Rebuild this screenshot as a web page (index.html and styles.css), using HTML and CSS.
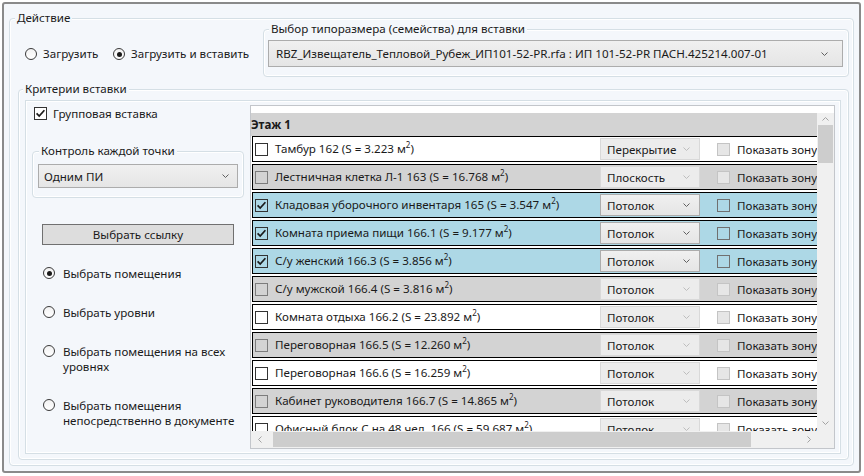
FILE: index.html
```html
<!DOCTYPE html>
<html lang="ru">
<head>
<meta charset="utf-8">
<title>Вставка извещателей</title>
<link rel="stylesheet" href="styles.css">
</head>
<body>
<div class="window">
  <section class="gb gb-action">
    <div class="gb-title">Действие</div>
    <div class="action-row">
      <div class="mode">
        <div class="radio radio-first"><span class="rb"></span><span>Загрузить</span></div>
        <div class="radio"><span class="rb on"></span><span>Загрузить и вставить</span></div>
      </div>
      <section class="gb gb-family">
        <div class="gb-title">Выбор типоразмера (семейства) для вставки</div>
        <div class="combo combo-family">
          <span class="combo-text">RBZ_Извещатель_Тепловой_Рубеж_ИП101-52-PR.rfa : ИП 101-52-PR ПАСН.425214.007-01</span>
          <svg class="chev" width="7" height="4" viewBox="0 0 7 4"><polyline points="0.5,0.5 3.5,3.5 6.5,0.5"/></svg>
        </div>
      </section>
    </div>

    <section class="gb gb-criteria">
      <div class="gb-title gb-title-crit">Критерии вставки</div>
      <div class="crit-panel">
        <div class="left-col">
          <div class="check-line">
            <span class="cb"><svg width="11" height="11" viewBox="0 0 11 11"><path d="M1.6 5.4 L4.2 8.1 L9.4 2.2"/></svg></span>
            <span class="check-label">Групповая вставка</span>
          </div>

          <section class="gb gb-control">
            <div class="gb-title gb-title-control">Контроль каждой точки</div>
            <div class="combo combo-control">
              <span class="combo-text">Одним ПИ</span>
              <svg class="chev" width="7" height="4" viewBox="0 0 7 4"><polyline points="0.5,0.5 3.5,3.5 6.5,0.5"/></svg>
            </div>
          </section>

          <div class="btn">Выбрать ссылку</div>

          <div class="radio-list">
            <div class="radio r-item"><span class="rb on"></span><span class="r-text">Выбрать помещения</span></div>
            <div class="radio r-item"><span class="rb"></span><span class="r-text">Выбрать уровни</span></div>
            <div class="radio r-item"><span class="rb"></span><span class="r-text">Выбрать помещения на всех уровнях</span></div>
            <div class="radio r-item"><span class="rb"></span><span class="r-text">Выбрать помещения непосредственно в документе</span></div>
          </div>
        </div>

        <div class="grid">
          <div class="grid-main">
            <div class="viewport">
              <div class="group-header">Этаж 1</div>

              <div class="row row-white">
                <span class="cb cb-row"></span>
                <span class="room">Тамбур 162 (S = 3.223 м<sup>2</sup>)</span>
                <span class="combo combo-row disabled"><span class="combo-text">Перекрытие</span><svg class="chev" width="7" height="4" viewBox="0 0 7 4"><polyline points="0.5,0.5 3.5,3.5 6.5,0.5"/></svg></span>
                <span class="cb cb-zone disabled"></span>
                <span class="zone-label">Показать зону</span>
              </div>

              <div class="row row-gray">
                <span class="cb cb-row"></span>
                <span class="room">Лестничная клетка Л-1 163 (S = 16.768 м<sup>2</sup>)</span>
                <span class="combo combo-row disabled"><span class="combo-text">Плоскость</span><svg class="chev" width="7" height="4" viewBox="0 0 7 4"><polyline points="0.5,0.5 3.5,3.5 6.5,0.5"/></svg></span>
                <span class="cb cb-zone disabled"></span>
                <span class="zone-label">Показать зону</span>
              </div>

              <div class="row row-blue">
                <span class="cb cb-row"><svg width="11" height="11" viewBox="0 0 11 11"><path d="M1.6 5.4 L4.2 8.1 L9.4 2.2"/></svg></span>
                <span class="room">Кладовая уборочного инвентаря 165 (S = 3.547 м<sup>2</sup>)</span>
                <span class="combo combo-row"><span class="combo-text">Потолок</span><svg class="chev" width="7" height="4" viewBox="0 0 7 4"><polyline points="0.5,0.5 3.5,3.5 6.5,0.5"/></svg></span>
                <span class="cb cb-zone"></span>
                <span class="zone-label">Показать зону</span>
              </div>

              <div class="row row-blue">
                <span class="cb cb-row"><svg width="11" height="11" viewBox="0 0 11 11"><path d="M1.6 5.4 L4.2 8.1 L9.4 2.2"/></svg></span>
                <span class="room">Комната приема пищи 166.1 (S = 9.177 м<sup>2</sup>)</span>
                <span class="combo combo-row"><span class="combo-text">Потолок</span><svg class="chev" width="7" height="4" viewBox="0 0 7 4"><polyline points="0.5,0.5 3.5,3.5 6.5,0.5"/></svg></span>
                <span class="cb cb-zone"></span>
                <span class="zone-label">Показать зону</span>
              </div>

              <div class="row row-blue">
                <span class="cb cb-row"><svg width="11" height="11" viewBox="0 0 11 11"><path d="M1.6 5.4 L4.2 8.1 L9.4 2.2"/></svg></span>
                <span class="room">С/у женский 166.3 (S = 3.856 м<sup>2</sup>)</span>
                <span class="combo combo-row"><span class="combo-text">Потолок</span><svg class="chev" width="7" height="4" viewBox="0 0 7 4"><polyline points="0.5,0.5 3.5,3.5 6.5,0.5"/></svg></span>
                <span class="cb cb-zone"></span>
                <span class="zone-label">Показать зону</span>
              </div>

              <div class="row row-gray">
                <span class="cb cb-row"></span>
                <span class="room">С/у мужской 166.4 (S = 3.816 м<sup>2</sup>)</span>
                <span class="combo combo-row disabled"><span class="combo-text">Потолок</span><svg class="chev" width="7" height="4" viewBox="0 0 7 4"><polyline points="0.5,0.5 3.5,3.5 6.5,0.5"/></svg></span>
                <span class="cb cb-zone disabled"></span>
                <span class="zone-label">Показать зону</span>
              </div>

              <div class="row row-white">
                <span class="cb cb-row"></span>
                <span class="room">Комната отдыха 166.2 (S = 23.892 м<sup>2</sup>)</span>
                <span class="combo combo-row disabled"><span class="combo-text">Потолок</span><svg class="chev" width="7" height="4" viewBox="0 0 7 4"><polyline points="0.5,0.5 3.5,3.5 6.5,0.5"/></svg></span>
                <span class="cb cb-zone disabled"></span>
                <span class="zone-label">Показать зону</span>
              </div>

              <div class="row row-gray">
                <span class="cb cb-row"></span>
                <span class="room">Переговорная 166.5 (S = 12.260 м<sup>2</sup>)</span>
                <span class="combo combo-row disabled"><span class="combo-text">Потолок</span><svg class="chev" width="7" height="4" viewBox="0 0 7 4"><polyline points="0.5,0.5 3.5,3.5 6.5,0.5"/></svg></span>
                <span class="cb cb-zone disabled"></span>
                <span class="zone-label">Показать зону</span>
              </div>

              <div class="row row-white">
                <span class="cb cb-row"></span>
                <span class="room">Переговорная 166.6 (S = 16.259 м<sup>2</sup>)</span>
                <span class="combo combo-row disabled"><span class="combo-text">Потолок</span><svg class="chev" width="7" height="4" viewBox="0 0 7 4"><polyline points="0.5,0.5 3.5,3.5 6.5,0.5"/></svg></span>
                <span class="cb cb-zone disabled"></span>
                <span class="zone-label">Показать зону</span>
              </div>

              <div class="row row-gray">
                <span class="cb cb-row"></span>
                <span class="room">Кабинет руководителя 166.7 (S = 14.865 м<sup>2</sup>)</span>
                <span class="combo combo-row disabled"><span class="combo-text">Потолок</span><svg class="chev" width="7" height="4" viewBox="0 0 7 4"><polyline points="0.5,0.5 3.5,3.5 6.5,0.5"/></svg></span>
                <span class="cb cb-zone disabled"></span>
                <span class="zone-label">Показать зону</span>
              </div>

              <div class="row row-white">
                <span class="cb cb-row"></span>
                <span class="room">Офисный блок С на 48 чел. 166 (S = 59.687 м<sup>2</sup>)</span>
                <span class="combo combo-row disabled"><span class="combo-text">Потолок</span><svg class="chev" width="7" height="4" viewBox="0 0 7 4"><polyline points="0.5,0.5 3.5,3.5 6.5,0.5"/></svg></span>
                <span class="cb cb-zone disabled"></span>
                <span class="zone-label">Показать зону</span>
              </div>
            </div>

            <div class="vscroll">
              <div class="sb-btn sb-up"><svg width="7" height="4" viewBox="0 0 7 4"><polyline points="0.5,3.5 3.5,0.5 6.5,3.5"/></svg></div>
              <div class="vthumb"></div>
              <div class="sb-fill"></div>
              <div class="sb-btn sb-down"><svg width="7" height="4" viewBox="0 0 7 4"><polyline points="0.5,0.5 3.5,3.5 6.5,0.5"/></svg></div>
            </div>
          </div>
          <div class="grid-foot">
            <div class="hscroll">
              <div class="sb-btn sb-left"><svg width="4" height="7" viewBox="0 0 4 7"><polyline points="3.5,0.5 0.5,3.5 3.5,6.5"/></svg></div>
              <div class="hthumb"></div>
              <div class="sb-fill"></div>
              <div class="sb-btn sb-right"><svg width="4" height="7" viewBox="0 0 4 7"><polyline points="0.5,0.5 3.5,3.5 0.5,6.5"/></svg></div>
            </div>
            <div class="corner"></div>
          </div>
        </div>
      </div>
    </section>
  </section>
</div>
</body>
</html>
```

FILE: styles.css
```css
* { box-sizing: border-box; }

html, body {
  margin: 0;
  padding: 0;
  background: #ffffff;
}

body {
  font-family: "Noto Sans", "Open Sans", sans-serif;
  font-size: 11.6px;
  color: #1a1a1a;
}

.window {
  width: 859px;
  height: 471px;
  margin: 2px 0 0 2px;
  border: 2px solid #8a8a8a;
  border-radius: 3px;
  background: #f4f7fb;
  padding: 14px 0 0 5px;
}

/* group boxes */
.gb {
  border: 1px solid #d5dfe5;
  border-radius: 4px;
  box-shadow: inset 0 0 0 1px #ffffff;
}

.gb-title {
  width: fit-content;
  height: 16px;
  line-height: 16px;
  padding: 0 2px;
  margin: -9px 0 0 5px;
  background: #f4f7fb;
  white-space: nowrap;
}

.gb-action {
  width: 845px;
  height: 448px;
}

.action-row {
  display: flex;
  margin-top: 3px;
}

.mode {
  width: 253px;
  display: flex;
  align-items: center;
  padding: 17px 0 0 15px;
  align-self: flex-start;
}

.radio {
  display: flex;
  align-items: center;
  height: 16px;
  line-height: 16px;
}

.radio-first { width: 88px; }

.rb {
  width: 12px;
  height: 12px;
  border-radius: 50%;
  border: 1px solid #3a3a3a;
  background: linear-gradient(#f2f2f2, #ffffff);
  display: inline-flex;
  align-items: center;
  justify-content: center;
  flex-shrink: 0;
  margin-right: 6px;
}

.rb.on::after {
  content: "";
  width: 5px;
  height: 5px;
  border-radius: 50%;
  background: #1a1a1a;
}

.gb-family {
  width: 586px;
  height: 48px;
}

/* combo boxes */
.combo {
  display: flex;
  align-items: center;
  justify-content: space-between;
  border: 1px solid #acacac;
  background: linear-gradient(#f0f0f0, #e5e5e5);
  color: #1a1a1a;
  white-space: nowrap;
  overflow: hidden;
}

.chev {
  flex-shrink: 0;
  fill: none;
  stroke: #606060;
  stroke-width: 1;
}

.combo-family {
  width: 575px;
  height: 27px;
  margin: 3px 0 0 4px;
  padding: 0 14px 0 7px;
}

.gb-criteria {
  width: 831px;
  height: 371px;
  margin: 12px 0 0 8px;
}

.gb-title-crit { margin-left: 4px; }

.crit-panel {
  width: 816px;
  height: 354px;
  margin: 3px 0 0 6px;
  border: 1px solid #d5dfe5;
  box-shadow: inset 0 0 0 1px #ffffff;
  display: flex;
  align-items: flex-start;
}

/* left column */
.left-col {
  width: 224px;
  flex-shrink: 0;
}

.check-line {
  display: flex;
  align-items: center;
  height: 16px;
  margin: 4px 0 0 8px;
}

.cb {
  width: 13px;
  height: 13px;
  border: 1px solid #333333;
  background: #ffffff;
  display: inline-flex;
  align-items: center;
  justify-content: center;
  flex-shrink: 0;
}

.cb svg {
  fill: none;
  stroke: #1a1a1a;
  stroke-width: 1.7;
}

.check-label { margin-left: 6px; }

.gb-control {
  width: 212px;
  height: 47px;
  margin: 30px 0 0 6px;
}

.gb-title-control { margin-left: 6px; }

.combo-control {
  width: 200px;
  height: 24px;
  margin: 5px 0 0 5px;
  padding: 0 8px 0 5px;
}

.btn {
  width: 192px;
  height: 21px;
  margin: 26px 0 0 16px;
  border: 1px solid #707070;
  background: #dddddd;
  display: flex;
  align-items: center;
  justify-content: center;
}

.radio-list {
  display: flex;
  flex-direction: column;
  gap: 24px;
  margin: 21px 0 0 17px;
}

.r-item {
  align-items: flex-start;
  height: auto;
  line-height: 15px;
}

.r-item .rb {
  margin: 1px 8px 0 0;
}

.r-text { width: 180px; }

/* data grid */
.grid {
  width: 585px;
  height: 344px;
  margin-top: 4px;
  border: 1px solid #c3c6cb;
  background: #ffffff;
  padding-top: 7px;
  display: flex;
  flex-direction: column;
}

.grid-main {
  display: flex;
  height: 318px;
}

.viewport {
  width: 566px;
  height: 318px;
  overflow: hidden;
}

.group-header {
  height: 23px;
  line-height: 23px;
  background: #d3d3d3;
  font-weight: bold;
  width: 640px;
}

.row {
  width: 640px;
  height: 26px;
  margin: 0 0 2px 1px;
  border: 1px solid #000000;
  display: flex;
  align-items: center;
  white-space: nowrap;
}

.row-white { background: #ffffff; }
.row-gray { background: #d3d3d3; }
.row-blue { background: #add8e6; }

.cb-row {
  margin-left: 2px;
  background: transparent;
}

.row-gray .cb-row { border-color: #7c7c7c; }

.room {
  width: 325px;
  flex-shrink: 0;
  margin-left: 7px;
  line-height: 18px;
}

sup {
  font-size: 8px;
  line-height: 0;
  vertical-align: 5px;
}

.combo-row {
  width: 100px;
  height: 22px;
  flex-shrink: 0;
  padding: 0 9px 0 6px;
}

.combo.disabled {
  background: #ececec;
  border-color: #d9d9d9;
}

.combo.disabled .chev { stroke: #bdbdbd; }

.cb-zone {
  margin-left: 17px;
  background: transparent;
  border-color: #707070;
}

.cb-zone.disabled {
  background: #e6e6e6;
  border-color: #c4c4c4;
}

.zone-label { margin-left: 7px; }

/* scrollbars */
.vscroll {
  width: 17px;
  height: 318px;
  background: #f0f0f0;
  display: flex;
  flex-direction: column;
}

.sb-btn {
  display: flex;
  align-items: center;
  justify-content: center;
  flex-shrink: 0;
}

.sb-btn svg {
  fill: none;
  stroke: #a3a3a3;
  stroke-width: 1;
}

.sb-up { height: 12px; }
.sb-down { height: 17px; }

.vthumb {
  height: 38px;
  margin: 0 1px;
  background: #cdcdcd;
}

.sb-fill { flex: 1; }

.grid-foot {
  display: flex;
  height: 17px;
}

.hscroll {
  width: 566px;
  height: 17px;
  background: #f0f0f0;
  display: flex;
}

.sb-left, .sb-right { width: 17px; }

.hthumb {
  width: 478px;
  margin: 1px 0 1px 5px;
  background: #cdcdcd;
}

.corner {
  width: 17px;
  height: 17px;
  background: #f0f0f0;
}
```
